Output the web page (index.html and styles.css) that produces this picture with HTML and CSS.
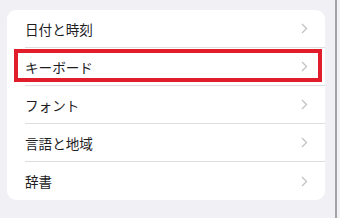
FILE: index.html
```html
<!DOCTYPE html>
<html lang="ja">
<head>
    <meta charset="UTF-8">
    <title>一般</title>
    <link rel="stylesheet" href="styles.css">
</head>
<body>
    <div class="page">
        <div class="list">
            <div class="row">
                <span>日付と時刻</span>
                <svg class="chev" viewBox="0 0 7 11"><polyline points="1,1 5.5,5.5 1,10"/></svg>
            </div>
            <div class="row">
                <span>キーボード</span>
                <svg class="chev" viewBox="0 0 7 11"><polyline points="1,1 5.5,5.5 1,10"/></svg>
                <div class="mark"></div>
            </div>
            <div class="row">
                <span>フォント</span>
                <svg class="chev" viewBox="0 0 7 11"><polyline points="1,1 5.5,5.5 1,10"/></svg>
            </div>
            <div class="row">
                <span>言語と地域</span>
                <svg class="chev" viewBox="0 0 7 11"><polyline points="1,1 5.5,5.5 1,10"/></svg>
            </div>
            <div class="row">
                <span>辞書</span>
                <svg class="chev" viewBox="0 0 7 11"><polyline points="1,1 5.5,5.5 1,10"/></svg>
            </div>
        </div>
    </div>
    <div class="edge"></div>
</body>
</html>
```

FILE: styles.css
```css
body {
    margin: 0;
    background-color: #f1f0f5;
    font-family: "Noto Sans CJK JP", "Noto Sans", sans-serif;
    display: flex;
    height: 218px;
    overflow: hidden;
}

.page {
    width: 335px;
    padding: 10px 10px 0 7px;
    box-sizing: border-box;
}

.list {
    background-color: #fff;
    border-radius: 9px;
    padding-left: 18px;
}

.row {
    position: relative;
    display: flex;
    align-items: center;
    justify-content: space-between;
    height: 37px;
    padding-right: 17px;
    border-top: 1px solid #dedee1;
    font-size: 13.6px;
    color: #1d1d1f;
}

.row:first-child {
    border-top: none;
}

.row:last-child {
    height: 38px;
}

.chev {
    width: 7px;
    height: 11px;
    fill: none;
    stroke: #c4c4c8;
    stroke-width: 1.4;
}

/* red highlight frame over the keyboard row */
.mark {
    position: absolute;
    top: 1px;
    left: -11px;
    right: 3px;
    height: 33px;
    border: 4px solid #e11d2b;
    box-sizing: border-box;
}

.edge {
    width: 2px;
    background-color: #a3a3a8;
}
```
